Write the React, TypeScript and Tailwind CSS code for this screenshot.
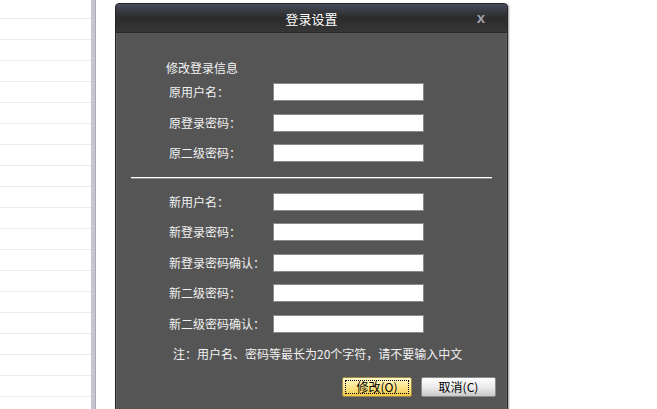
const oldFields = ['原用户名：', '原登录密码：', '原二级密码：'];
const newFields = ['新用户名：', '新登录密码：', '新登录密码确认：', '新二级密码：', '新二级密码确认：'];

const Row = ({ label }: { label: string }) => (
  <div className="flex h-[30.5px] items-center">
    <span className="w-[107px] pl-[52px] whitespace-nowrap text-[12px] text-[#f2f2f2]">{label}</span>
    <div className="ml-[49px] h-[18px] w-[151px] border border-[#8a8a8a] bg-white" />
  </div>
);

const App = () => {
  return (
    <div className="flex h-[409px] w-[657px] overflow-hidden bg-white font-['Noto_Sans_CJK_SC',sans-serif]">
      {/* list on the left */}
      <div className="flex w-[91px] flex-col">
        <div className="h-[18px] shrink-0" />
        {Array.from({ length: 19 }).map((_, i) => (
          <div key={i} className="h-[21px] shrink-0 border-t border-[#ebebeb]" />
        ))}
      </div>
      <div className="w-[5px] border-r border-[#a9a9b8] bg-[#c6c6d3]" />

      {/* dialog */}
      <div className="ml-[19px] mt-[3px] flex h-[410px] w-[393px] flex-col rounded-t-[4px] border border-[#262626] bg-[#555555] shadow-[1px_1px_2px_rgba(0,0,0,0.4)]">
        <div className="relative flex h-[29px] shrink-0 items-center justify-center rounded-t-[3px] border-b border-[#2a2a2a] bg-gradient-to-b from-[#474b5a] via-[#2b2b2b] to-[#363636]">
          <span className="text-[13px] leading-none text-white">登录设置</span>
          <span className="absolute right-[22px] top-[6px] font-['Liberation_Sans',sans-serif] text-[15px] font-bold leading-none text-[#a0a3ad]">
            x
          </span>
        </div>

        <div className="flex flex-1 flex-col border-x border-[#626262] pt-[26px]">
          <div className="h-[18px] pl-[49px] text-[12px] leading-[18px] text-[#f2f2f2]">修改登录信息</div>
          {oldFields.map((f) => (
            <Row key={f} label={f} />
          ))}
          <div className="mx-[14px] mt-[8px] h-[1px] bg-white shadow-[0_1px_0_#8c8c8c]" />
          <div className="h-[9px]" />
          {newFields.map((f) => (
            <Row key={f} label={f} />
          ))}
          <div className="mt-[6px] h-[18px] pl-[56px] text-[12px] leading-[18px] text-[#f2f2f2]">
            注：用户名、密码等最长为20个字符，请不要输入中文
          </div>
          <div className="mt-[14px] flex justify-end gap-[9px] pr-[10px]">
            <button className="flex h-[20px] w-[70px] items-center justify-center rounded-[2px] border border-[#9c8a4c] bg-gradient-to-b from-[#fff8c8] via-[#fde58a] to-[#f3c842] p-[2px]">
              <span className="flex h-full w-full items-center justify-center border border-dotted border-black text-[12px] leading-none text-black">
                修改(O)
              </span>
            </button>
            <button className="flex h-[20px] w-[75px] items-center justify-center rounded-[2px] border border-[#8a8a8a] bg-gradient-to-b from-[#fdfdfd] via-[#ececec] to-[#c9c9c9] text-[12px] leading-none text-black">
              取消(C)
            </button>
          </div>
        </div>
      </div>
    </div>
  );
};

export default App;
